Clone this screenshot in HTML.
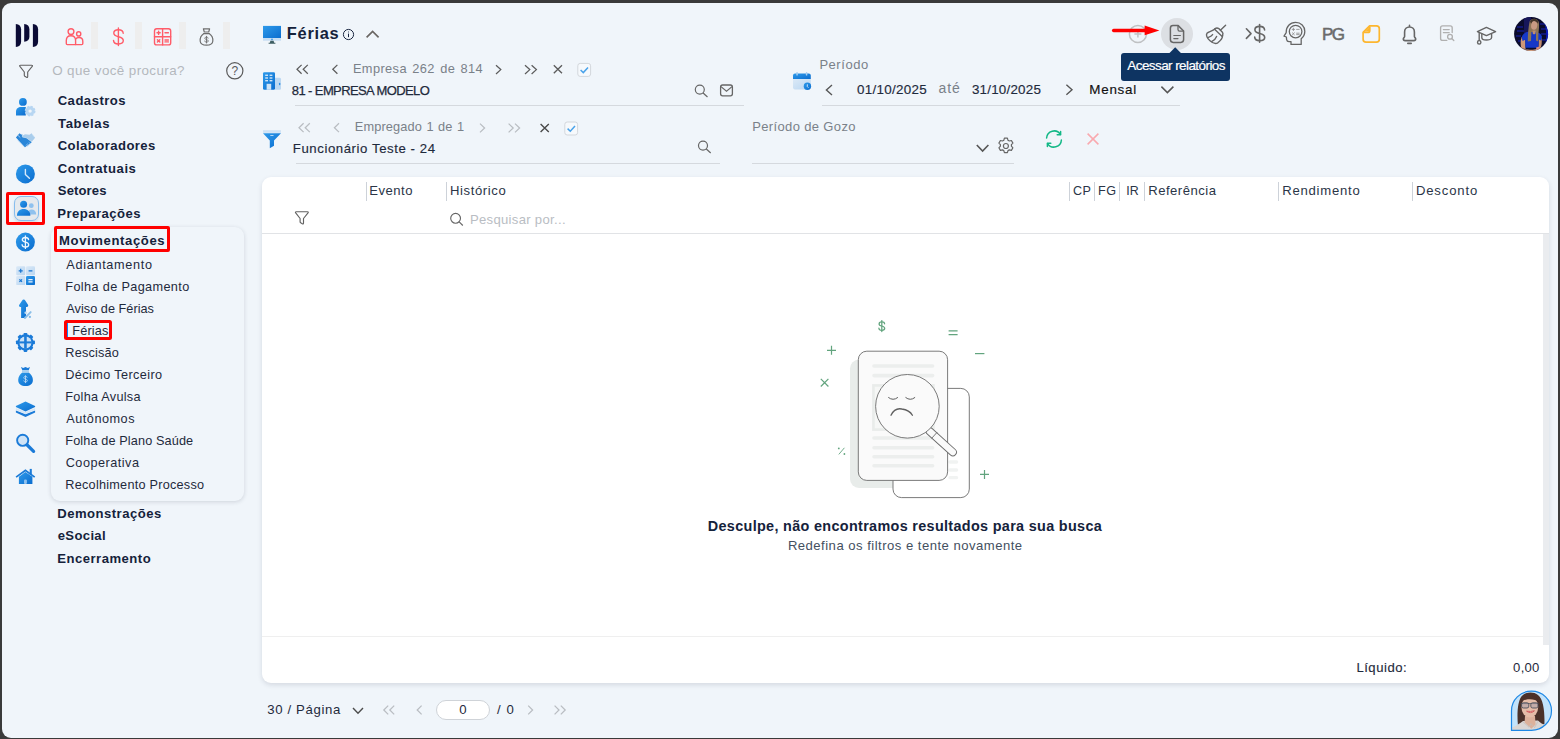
<!DOCTYPE html>
<html lang="pt-BR">
<head>
<meta charset="utf-8">
<title>Férias</title>
<style>
*{box-sizing:border-box;margin:0;padding:0}
html,body{width:1560px;height:739px;overflow:hidden;background:#3a3a3a}
body{font-family:"Liberation Sans",sans-serif;position:relative}
#app{position:absolute;left:2px;top:3px;width:1556px;height:734.5px;background:#f0f5fa;border-radius:9px;overflow:hidden}
#stage{position:absolute;left:-2px;top:-3px;width:1560px;height:739px}
.t{position:absolute;white-space:nowrap;line-height:1;display:block}
.a{position:absolute;display:block}
svg{position:absolute;overflow:visible}
.ln{position:absolute;height:1px;background:#d5d9de}
.sep{position:absolute;width:1px;top:182px;height:19px;background:#cdd2d9}
.tab{position:absolute;top:22px;width:6.5px;height:26.5px;background:#eeeeee}
</style>
</head>
<body>
<div id="app"><div id="stage">

<!-- top tab separators -->
<i class="tab" style="left:91px"></i><i class="tab" style="left:135px"></i><i class="tab" style="left:179px"></i><i class="tab" style="left:223px"></i>

<!-- selected side icon -->
<div class="a" style="left:13.5px;top:195.5px;width:25px;height:25.5px;border-radius:7px;background:#e5e9ed;border:1px solid #86bdee;box-shadow:0 2px 3px rgba(80,100,130,.18)"></div>
<div class="a" style="left:6px;top:192px;width:39px;height:32.8px;border:3.1px solid #ff0000;border-radius:2px"></div>

<!-- submenu card -->
<div class="a" style="left:51px;top:227px;width:193px;height:273.5px;border-radius:9px;background:#f0f5fa;box-shadow:0 1px 4px rgba(30,40,60,.16)"></div>
<div class="a" style="left:54px;top:226px;width:116.1px;height:25.9px;border:3px solid #ff0000;border-radius:2px"></div>
<div class="a" style="left:63.9px;top:319.9px;width:48.2px;height:20.1px;border:3px solid #ff0000;border-radius:2.5px"></div>
<div class="a" style="left:66.9px;top:322.9px;width:1.3px;height:14.1px;background:#0a84ff"></div>

<!-- filter underlines -->
<i class="ln" style="left:295px;top:105px;width:449px"></i>
<i class="ln" style="left:296px;top:163px;width:424px"></i>
<i class="ln" style="left:822px;top:105px;width:358px"></i>
<i class="ln" style="left:752px;top:163px;width:262px"></i>

<!-- table card -->
<div class="a" style="left:262px;top:177px;width:1287px;height:506px;border-radius:9px;background:#fff;box-shadow:0 2px 5px rgba(30,40,60,.13)"></div>
<i class="ln" style="left:262px;top:233px;width:1287px;background:#e1e3e6"></i>
<i class="ln" style="left:262px;top:636px;width:1287px;background:#efefef"></i>
<div class="a" style="left:1543px;top:234px;width:6px;height:411px;background:#eaecef"></div>
<i class="sep" style="left:366px"></i><i class="sep" style="left:446px"></i><i class="sep" style="left:1069px"></i><i class="sep" style="left:1094px"></i><i class="sep" style="left:1119px"></i><i class="sep" style="left:1144px"></i><i class="sep" style="left:1278px"></i><i class="sep" style="left:1412px"></i>

<!-- pagination input -->
<div class="a" style="left:436px;top:700px;width:53.5px;height:19.5px;border-radius:10px;background:#fff;border:1px solid #cfd3d8"></div>

<!-- tooltip -->
<div class="a" style="left:1160.5px;top:17.5px;width:32px;height:32px;border-radius:50%;background:#dcdfe3"></div>
<div class="a" style="left:1121px;top:53px;width:108.8px;height:28px;border-radius:3px;background:#0e3462"></div>
<div class="a" style="left:1171.4px;top:48.9px;width:8.4px;height:8.4px;background:#0e3462;transform:rotate(45deg)"></div>

<svg width="1560" height="739" viewBox="0 0 1560 739" style="left:0;top:0">
<defs>
<linearGradient id="bl" x1="0" y1="0" x2="1" y2="1"><stop offset="0" stop-color="#2e9aea"/><stop offset="1" stop-color="#0b6dcf"/></linearGradient>
<linearGradient id="lb" x1="0" y1="0" x2="1" y2="1"><stop offset="0" stop-color="#dbe9f7"/><stop offset="1" stop-color="#b9d6f1"/></linearGradient>
</defs>
<!-- logo -->
<g fill="#0b0b35">
<path d="M15.8,24 C19.2,24.2 21.1,26.2 21.1,29.2 V41.8 C21.1,44.8 19.2,46.8 15.8,47 Z"/>
<path d="M24.2,24 C27.6,24.2 29.4,26.2 29.4,29.2 V36.8 C29.4,39.7 27.6,41.6 24.2,41.8 Z"/>
<path d="M32.9,24 C36.3,24.2 38.1,26.2 38.1,29.2 V41.8 C38.1,44.8 36.3,46.8 32.9,47 Z"/>
</g>
<!-- top tab icons -->
<g fill="none" stroke="#ff5c69" stroke-width="1.4" stroke-linecap="round" stroke-linejoin="round">
<circle cx="71" cy="31.6" r="2.9"/><circle cx="78.7" cy="33.9" r="2.1"/>
<path d="M66.3,43.6 V40.6 C66.3,37.5 68.3,35.7 70.9,35.7 C73.6,35.7 75.6,37.5 75.6,40.6 V44.6 H67.3 Q66.3,44.6 66.3,43.6 Z"/>
<path d="M75.6,44.6 H81.8 Q82.8,44.6 82.8,43.6 V41.4 C82.8,38.8 81.2,37.5 79,37.5 C77.6,37.5 76.4,38 75.7,39"/>
<path d="M118.4,27.9 V45.6"/>
<path d="M123.2,33.2 C123,30.7 121,29.7 118.4,29.7 C115.8,29.7 113.8,30.9 113.8,33 C113.8,35.4 116,36.1 118.4,36.7 C120.9,37.3 123.3,38.1 123.3,40.6 C123.3,42.8 121.2,44 118.4,44 C115.6,44 113.6,42.8 113.5,40.4"/>
<rect x="154.5" y="28.7" width="16.2" height="16.2" rx="2.2"/>
<path d="M162.6,28.7 V44.9 M154.5,36.8 H170.7"/>
<path d="M157,32.8 H160.2 M158.6,31.2 V34.4 M165,32.8 H168.4 M157.4,39.7 L159.8,42.1 M159.8,39.7 L157.4,42.1 M165,40 H168.4 M165,41.9 H168.4"/>
</g>
<g fill="none" stroke="#6e6e6e" stroke-width="1.2" stroke-linejoin="round" stroke-linecap="round">
<path d="M203.9,33.6 C201,35.6 199.9,38.6 200.2,41.2 C200.5,44 203,45.1 206.5,45.1 C210,45.1 212.5,44 212.8,41.2 C213.1,38.6 212,35.6 209.1,33.6 Z"/>
<path d="M203.4,28.8 H209.6 L208.7,32 H204.3 Z M204,33.5 H209"/>
<path d="M206.5,36.3 V43 M208.1,38.2 C208,37.4 207.4,37.1 206.5,37.1 C205.6,37.1 204.9,37.5 204.9,38.3 C204.9,39.2 205.7,39.4 206.5,39.6 C207.4,39.8 208.2,40.1 208.2,41 C208.2,41.8 207.5,42.2 206.5,42.2 C205.5,42.2 204.9,41.8 204.8,41" stroke-width="0.9"/>
</g>
<!-- sidebar filter + help -->
<path d="M20.6,65.2 H31.6 Q33,65.2 32.2,66.4 L27.7,72 V76.6 Q27.7,78 26.5,77.3 L24.9,76.3 Q24.3,75.9 24.3,75.2 V72 L19.9,66.4 Q19.1,65.2 20.6,65.2 Z" fill="none" stroke="#626262" stroke-width="1.15" stroke-linejoin="round"/>
<circle cx="234.8" cy="70.8" r="8.1" fill="none" stroke="#5a5a5a" stroke-width="1.2"/>
<text x="234.8" y="75" text-anchor="middle" font-family="Liberation Sans, sans-serif" font-size="12" fill="#5a5a5a">?</text>

<!-- side icons -->
<!-- person gear -->
<circle cx="22.9" cy="101.9" r="3.9" fill="url(#bl)"/>
<path d="M16,115.4 V111.5 C16,108.6 18.2,106.9 21,106.9 H25.8 V115.4 Z" fill="url(#bl)"/>
<circle cx="30.1" cy="111.1" r="4.6" fill="#b7d6f2" stroke="#b7d6f2" stroke-width="1.6" stroke-dasharray="2.2 1.4"/>
<circle cx="30.1" cy="111.1" r="1.7" fill="#f0f5fa"/>
<!-- handshake -->
<path d="M17.4,140.4 L24.3,147.5 L25.6,146.3 L18.8,139.2 Z" fill="#cfe3f5"/>
<path d="M31.5,133.2 L35.1,137.7 L31.8,141.8 L26.6,138.1 L22.7,137.4 L22.1,136.1 L25,134.2 L29.5,134.8 Z" fill="#a9cdec"/>
<path d="M19.5,133.2 L15.9,137.6 L25,147.2 L31.8,142.3 L26.6,138.3 L22.7,137.6 L21.7,136.1 L22.8,134.8 L21.1,134.6 Z" fill="#2a86d8"/>
<path d="M17.6,135 L20.3,137.6" stroke="#cfe3f6" stroke-width="0.7" fill="none"/>
<path d="M25.6,145.6 L28,143.6 M27,146.4 L29.6,144.2 M28.6,142.2 L30.6,143.8" stroke="#9cc6ee" stroke-width="0.7" fill="none"/>
<path d="M32.4,134.4 L34,136.6" stroke="#d6e8f8" stroke-width="0.7" fill="none"/>
<!-- clock -->
<circle cx="25.4" cy="173.9" r="9.5" fill="url(#bl)"/>
<path d="M25.4,169.4 V174.4 L29.4,178.2" fill="none" stroke="#d6e9fb" stroke-width="1.4" stroke-linecap="round" stroke-linejoin="round"/>
<!-- selected people -->
<circle cx="31.3" cy="205.7" r="2.4" fill="#8fc1ee"/>
<path d="M27.5,214.4 C27.6,211.3 29.3,209.6 31.6,209.6 C34.2,209.6 36.1,211.5 36.2,214.4 Z" fill="#8fc1ee"/>
<circle cx="23.6" cy="204.2" r="3.5" fill="url(#bl)"/>
<path d="M16.9,215.7 C17,211.4 19.8,209 23.6,209 C27.5,209 30.3,211.4 30.4,215.7 Z" fill="url(#bl)"/>
<!-- dollar circle -->
<circle cx="25.4" cy="242.1" r="9.5" fill="url(#bl)"/>
<g fill="none" stroke="#eef6fe" stroke-width="1.3" stroke-linecap="round">
<path d="M25.4,236 V248.4"/>
<path d="M28.6,239.7 C28.4,238.1 27.1,237.5 25.4,237.5 C23.6,237.5 22.3,238.3 22.3,239.8 C22.3,241.4 23.8,241.8 25.4,242.2 C27.1,242.6 28.7,243.1 28.7,244.8 C28.7,246.3 27.3,247 25.4,247 C23.5,247 22.2,246.3 22.1,244.7"/>
</g>
<!-- calc -->
<rect x="16.2" y="266.3" width="9" height="9" rx="1.2" fill="url(#lb)"/>
<rect x="26" y="266.3" width="9" height="9" rx="1.2" fill="url(#lb)"/>
<rect x="16.2" y="276.1" width="9" height="9" rx="1.2" fill="url(#lb)"/>
<rect x="26" y="276.1" width="9" height="9" rx="1.2" fill="url(#bl)"/>
<path d="M18.7,270.8 H22.7 M20.7,268.8 V272.8 M28.6,270.8 H32.4 M19.4,279.3 L22,281.9 M22,279.3 L19.4,281.9" stroke="#1976d2" stroke-width="1.2" fill="none"/>
<path d="M28.4,279.6 H32.6 M28.4,281.8 H32.6" stroke="#eaf4fd" stroke-width="1.2" fill="none"/>
<!-- arrow up percent -->
<path d="M23.7,299.6 C24.4,299.6 24.9,300 25.4,300.7 L28,304.8 C28.6,305.9 28,307 26.8,307 H26 V317.9 H21.1 V307 H20.4 C19.2,307 18.6,305.9 19.3,304.8 L22,300.7 C22.5,300 23,299.6 23.7,299.6 Z" fill="url(#bl)"/>
<circle cx="25.6" cy="312.8" r="1.2" fill="#b9d8f2"/>
<path d="M24.9,318 L30.7,312.1" stroke="#8cbfe8" stroke-width="1.9" stroke-linecap="round" fill="none"/>
<circle cx="29.9" cy="316.9" r="1.15" fill="#7fb8e6"/>
<!-- gear cross -->
<g transform="translate(25.45 342.4)" fill="#1b7bd8">
<rect x="-1.9" y="-9.5" width="3.8" height="4" rx="0.8" transform="rotate(0)"/><rect x="-1.9" y="-9.5" width="3.8" height="4" rx="0.8" transform="rotate(45)"/><rect x="-1.9" y="-9.5" width="3.8" height="4" rx="0.8" transform="rotate(90)"/><rect x="-1.9" y="-9.5" width="3.8" height="4" rx="0.8" transform="rotate(135)"/><rect x="-1.9" y="-9.5" width="3.8" height="4" rx="0.8" transform="rotate(180)"/><rect x="-1.9" y="-9.5" width="3.8" height="4" rx="0.8" transform="rotate(225)"/><rect x="-1.9" y="-9.5" width="3.8" height="4" rx="0.8" transform="rotate(270)"/><rect x="-1.9" y="-9.5" width="3.8" height="4" rx="0.8" transform="rotate(315)"/>
<circle r="7" fill="none" stroke="#1b7bd8" stroke-width="2.2"/>
<circle r="6" fill="#cde2f6"/>
<rect x="-1.3" y="-6.3" width="2.6" height="12.6"/>
<rect x="-6.3" y="-1" width="12.6" height="2"/>
</g>
<!-- money bag -->
<path d="M22.2,372.6 H28.8 C31,374.4 32.9,377 32.9,380 C32.9,384 29.8,386.1 25.5,386.1 C21.2,386.1 18.2,384 18.2,380 C18.2,377 20,374.4 22.2,372.6 Z" fill="url(#bl)"/>
<path d="M20.9,366.9 L23.2,367.9 L25.5,366.9 L27.8,367.9 L30,366.9 L28.7,370.2 H22.4 Z" fill="#1b7bd8"/>
<rect x="22" y="370.2" width="6.9" height="2.4" fill="#a9cfee"/>
<path d="M25.5,375.3 V383.1 M27.2,377.6 C27.1,376.7 26.4,376.4 25.5,376.4 C24.5,376.4 23.8,376.8 23.8,377.7 C23.8,378.6 24.7,378.9 25.5,379.1 C26.4,379.3 27.3,379.6 27.3,380.6 C27.3,381.4 26.5,381.9 25.5,381.9 C24.5,381.9 23.8,381.4 23.7,380.5" fill="none" stroke="#b9d8f5" stroke-width="0.9"/>
<!-- layers -->
<path d="M15.9,410.4 L25.5,414.3 L35.1,410.4 V412.6 L25.5,417.1 L15.9,412.6 Z" fill="#1b7bd8"/>
<path d="M15.9,407.9 L25.5,411.9 L35.1,407.9 V410 L25.5,414 L15.9,410 Z" fill="#d4e6f7"/>
<path d="M25.5,401.5 L35.1,406 V407 L25.5,411.4 L15.9,407 V406 Z" fill="url(#bl)"/>
<!-- magnifier -->
<path d="M27.2,445 L33.6,451.4" stroke="#1b7bd8" stroke-width="3.2" stroke-linecap="round"/>
<circle cx="22.7" cy="440.3" r="5.6" fill="#cfe3f6" stroke="#1b7bd8" stroke-width="1.9"/>
<!-- house -->
<rect x="29.7" y="468.9" width="2.1" height="6" fill="#1b7bd8"/>
<path d="M25.4,469.2 L35.2,476.6 L34.2,477.8 L25.4,471.4 L16.6,477.8 L15.6,476.6 Z" fill="#1b7bd8"/>
<path d="M18.9,476.8 L25.4,472 L32.4,476.8 V484 H18.9 Z" fill="url(#bl)"/>
<rect x="24" y="479.6" width="2.9" height="4.4" rx="1" fill="#8fc1ee"/>
</svg>
<svg width="1560" height="739" viewBox="0 0 1560 739" style="left:0;top:0">
<!-- monitor -->
<rect x="263" y="25.9" width="18" height="12.2" fill="url(#bl)"/>
<rect x="263" y="38.1" width="18" height="2.6" fill="#c6ddf3"/>
<circle cx="272" cy="39.4" r="0.8" fill="#2e8fe4"/>
<path d="M270.4,40.7 H273.6 L274.2,42.8 H275.4 V43.8 H268.6 V42.8 H269.8 Z" fill="#3f5f63"/>
<!-- info -->
<circle cx="348.5" cy="34.5" r="5.1" fill="none" stroke="#1a2640" stroke-width="1"/>
<path d="M348.5,33.6 V37.2 M348.5,31.6 V32.4" stroke="#1a2640" stroke-width="1" fill="none"/>
<!-- chevron up -->
<path d="M366.6,37.4 L372.6,31.5 L378.6,37.4" fill="none" stroke="#6a6663" stroke-width="1.7"/>

<!-- building -->
<rect x="263" y="72.2" width="12" height="17.6" rx="1.3" fill="url(#bl)"/>
<path d="M275,77.8 H279.6 Q281,77.8 281,79.2 V88.6 Q281,89.8 279.8,89.8 H275 Z" fill="#bcd8f2"/>
<rect x="279" y="82.8" width="1.3" height="2.4" rx="0.6" fill="#2f8fe3"/>
<g fill="#cfe4f7"><rect x="265.2" y="74.6" width="2.8" height="1.4"/><rect x="269.6" y="74.6" width="2.8" height="1.4"/><rect x="265.2" y="77.3" width="2.8" height="1.4"/><rect x="269.6" y="77.3" width="2.8" height="1.4"/><rect x="265.2" y="80" width="2.8" height="1.4"/><rect x="269.6" y="80" width="2.8" height="1.4"/><rect x="266.6" y="83.8" width="4.6" height="6"/></g>
<!-- funnel -->
<rect x="263" y="130.2" width="18" height="2.6" fill="#cfe3f6"/>
<path d="M263,133.2 H281 L274,140.6 V145.8 L269.8,148.2 V140.6 Z" fill="url(#bl)"/>
<rect x="270.2" y="135" width="3.4" height="1" rx="0.5" fill="#b6d6f3"/>

<!-- row 1 nav -->
<g fill="none" stroke="#5c5c5c" stroke-width="1.25">
<path d="M301.6,64.9 L297,69.3 L301.6,73.7 M307.8,64.9 L303.2,69.3 L307.8,73.7"/>
<path d="M337.4,64.9 L332.8,69.3 L337.4,73.7"/>
<path d="M496,65.2 L500.8,69.6 L496,74"/>
<path d="M525,65.2 L529.8,69.6 L525,74 M531.6,65.2 L536.4,69.6 L531.6,74"/>
<path d="M553.8,65.3 L562,73.3 M562,65.3 L553.8,73.3" stroke-width="1.35"/>
</g>
<rect x="577.8" y="63.4" width="12.8" height="13" rx="2.4" fill="#f6f9fc" stroke="#d3d7dc" stroke-width="1"/>
<path d="M580.6,70 L583.3,72.6 L588,67.4" fill="none" stroke="#4aa3ea" stroke-width="1.5"/>
<circle cx="699.8" cy="89.6" r="4.5" fill="none" stroke="#666" stroke-width="1.2"/>
<path d="M703.1,93 L707.5,97" stroke="#666" stroke-width="1.2"/>
<rect x="720.6" y="85" width="11.8" height="10.8" rx="2" fill="none" stroke="#666" stroke-width="1.3"/>
<path d="M721,86.6 L726.5,91.2 L732,86.6" fill="none" stroke="#666" stroke-width="1.2"/>

<!-- row 2 nav -->
<g fill="none" stroke="#b9bdc2" stroke-width="1.25">
<path d="M303.6,123.3 L299,127.7 L303.6,132.1 M309.8,123.3 L305.2,127.7 L309.8,132.1"/>
<path d="M339,123.3 L334.4,127.7 L339,132.1"/>
<path d="M480,123.6 L484.6,128 L480,132.4"/>
<path d="M508.6,123.6 L513.2,128 L508.6,132.4 M515,123.6 L519.6,128 L515,132.4"/>
</g>
<path d="M540.6,123.9 L548.8,131.9 M548.8,123.9 L540.6,131.9" fill="none" stroke="#4a4a4a" stroke-width="1.4"/>
<rect x="564.8" y="122" width="12.8" height="13" rx="2.4" fill="#f6f9fc" stroke="#d3d7dc" stroke-width="1"/>
<path d="M567.6,128.6 L570.3,131.2 L575,126" fill="none" stroke="#4aa3ea" stroke-width="1.5"/>
<circle cx="703" cy="145.6" r="4.5" fill="none" stroke="#666" stroke-width="1.2"/>
<path d="M706.3,149 L710.7,153" stroke="#666" stroke-width="1.2"/>

<!-- calendar -->
<rect x="796.3" y="72.2" width="1.5" height="3.6" rx="0.7" fill="#8fc1ee"/><rect x="805.8" y="72.2" width="1.5" height="3.6" rx="0.7" fill="#8fc1ee"/>
<path d="M793,79 V75.6 Q793,73.6 795,73.6 H808.8 Q810.8,73.6 810.8,75.6 V79 Z" fill="url(#bl)"/>
<rect x="796.3" y="72.6" width="1.5" height="3" rx="0.7" fill="#a9cff1"/><rect x="805.8" y="72.6" width="1.5" height="3" rx="0.7" fill="#a9cff1"/>
<path d="M793,79 H810.8 V87.6 Q810.8,89.5 808.8,89.5 H795 Q793,89.5 793,87.6 Z" fill="url(#lb)"/>
<circle cx="807.4" cy="86.3" r="3.7" fill="url(#bl)"/>
<path d="M807.3,84.3 V86.6 L808.4,87.7" fill="none" stroke="#e4f0fc" stroke-width="0.9"/>
<!-- period nav -->
<g fill="none" stroke="#575757" stroke-width="1.4">
<path d="M832,85 L826.4,90 L832,95"/>
<path d="M1066.4,84.8 L1072,89.8 L1066.4,94.8"/>
<path d="M1161.4,86.6 L1167.4,92.6 L1173.4,86.6" stroke-width="1.5"/>
<path d="M976.8,145 L982.6,151 L988.4,145" stroke-width="1.6"/>
</g>
<!-- gear -->
<g transform="translate(1005.9 146)" fill="none" stroke="#666" stroke-width="1.2" stroke-linejoin="round">
<path d="M-1.5,-7.8 h3 l0.6,2.1 l1.3,0.7 l2.1,-0.5 l1.5,2.6 l-1.5,1.6 v1.5 l1.5,1.6 l-1.5,2.6 l-2.1,-0.5 l-1.3,0.7 l-0.6,2.1 h-3 l-0.6,-2.1 l-1.3,-0.7 l-2.1,0.5 l-1.5,-2.6 l1.5,-1.6 v-1.5 l-1.5,-1.6 l1.5,-2.6 l2.1,0.5 l1.3,-0.7 z"/>
<circle r="2.5"/>
</g>
<!-- refresh -->
<g fill="none" stroke="#12b886" stroke-width="1.5" stroke-linecap="round" stroke-linejoin="round">
<path d="M1046.6,138 A7.5,7.5 0 0 1 1060.4,134.4"/>
<path d="M1061.4,140 A7.5,7.5 0 0 1 1047.6,143.6"/>
<path d="M1060.6,131.6 V134.8 H1057.2"/>
<path d="M1047.4,146.4 V143.2 H1050.8"/>
</g>
<path d="M1087.6,133.6 L1098.4,144.4 M1098.4,133.6 L1087.6,144.4" stroke="#f9a9af" stroke-width="1.5" fill="none"/>

<!-- header filter / search -->
<path transform="translate(275.8 146.5)" d="M20.6,65.2 H31.6 Q33,65.2 32.2,66.4 L27.7,72 V76.6 Q27.7,78 26.5,77.3 L24.9,76.3 Q24.3,75.9 24.3,75.2 V72 L19.9,66.4 Q19.1,65.2 20.6,65.2 Z" fill="none" stroke="#626262" stroke-width="1.15" stroke-linejoin="round"/>
<circle cx="455.6" cy="218.3" r="4.9" fill="none" stroke="#666" stroke-width="1.15"/>
<path d="M459.2,221.9 L462.8,225.5" stroke="#666" stroke-width="1.15"/>

<!-- pagination -->
<path d="M353,708 L358,713.2 L363,708" fill="none" stroke="#4c4c4c" stroke-width="1.4"/>
<g fill="none" stroke="#b9bdc2" stroke-width="1.25">
<path d="M388.2,705.6 L383.8,710 L388.2,714.4 M394.2,705.6 L389.8,710 L394.2,714.4"/>
<path d="M421.6,705.6 L417.2,710 L421.6,714.4"/>
<path d="M528.2,705.6 L532.6,710 L528.2,714.4"/>
<path d="M554.6,705.6 L559,710 L554.6,714.4 M560.8,705.6 L565.2,710 L560.8,714.4"/>
</g>

<!-- top right icons -->
<circle cx="1137.9" cy="33.9" r="8.5" fill="none" stroke="#bfc1c3" stroke-width="1.5"/>
<path d="M1134.4,33.9 H1141.4 M1137.9,30.4 V37.4" stroke="#bfc1c3" stroke-width="1.5"/>
<!-- doc -->
<g fill="none" stroke="#666" stroke-width="1.5" stroke-linejoin="round" stroke-linecap="round">
<path d="M1173,25.6 H1178.2 L1183.6,31 V39.6 Q1183.6,42.4 1180.8,42.4 H1173.2 Q1170.4,42.4 1170.4,39.6 V28.2 Q1170.4,25.6 1173,25.6 Z"/>
<path d="M1178,25.9 V29.6 Q1178,31.2 1179.6,31.2 H1183.3" stroke-width="1.3"/>
<path d="M1173.8,35.5 H1180.4 M1173.8,38.6 H1178" stroke-width="1.2"/>
</g>
<!-- red arrow -->
<path d="M1113.6,30.5 H1146" stroke="#ff0000" stroke-width="3.3" stroke-linecap="round"/>
<path d="M1144.6,25.6 L1159.4,30.4 L1144.6,35.2 Z" fill="#ff0000"/>
<!-- broom -->
<g fill="none" stroke="#666" stroke-width="1.4" stroke-linecap="round" stroke-linejoin="round">
<path d="M1220.4,30.2 L1225.6,25.2"/>
<path d="M1215,28.6 Q1217,27.4 1218.8,28.6 L1222.4,32.2 Q1223.4,33.6 1222.6,35.4"/>
<path d="M1214.6,29.2 L1222.2,36.4"/>
<path d="M1214.8,29 C1212.4,31.2 1208.6,31.4 1207,33.2 C1205.6,35 1207.2,38.4 1210,40.8 C1212.8,43.2 1216,44 1217.8,42.8 C1220.2,41 1222.6,38 1222.6,35.6"/>
<path d="M1208.4,37.4 Q1211.2,36.6 1212.6,34.6 M1211.6,41.6 Q1215.2,40 1216.6,36.4"/>
</g>
<!-- >$ -->
<g fill="none" stroke="#666" stroke-width="1.6" stroke-linecap="round" stroke-linejoin="round">
<path d="M1246.4,28.8 L1251,33.6 L1246.4,38.4"/>
<path d="M1259.6,24.6 V42.2"/>
<path d="M1264.6,30 C1264.4,27.4 1262.2,26.4 1259.6,26.4 C1257,26.4 1254.9,27.6 1254.9,29.8 C1254.9,32.2 1257.2,32.9 1259.6,33.5 C1262.2,34.1 1264.7,34.9 1264.7,37.4 C1264.7,39.6 1262.5,40.6 1259.6,40.6 C1256.8,40.6 1254.8,39.5 1254.7,37.1"/>
</g>
<!-- head -->
<g fill="none" stroke="#666" stroke-width="1.3" stroke-linejoin="round" stroke-linecap="round">
<path d="M1291,44.4 V41.6 H1289 Q1287,41.6 1286.6,39.6 L1286.4,37 L1284,36.2 L1286.2,32.6 C1286,26.6 1290,22.4 1295.6,22.4 C1301,22.4 1304.8,26.2 1304.8,31.4 C1304.8,34.6 1303.4,36.8 1301.2,38.8 V44.4 Z"/>
<circle cx="1295.6" cy="31.6" r="6.3"/>
<path d="M1292.2,29.4 H1294.6 M1293.4,28.2 V30.6 M1296.6,29.4 H1299.2 M1292.4,32.8 L1294.4,34.8 M1294.4,32.8 L1292.4,34.8 M1296.6,33.2 H1299.2 M1296.6,34.6 H1299.2" stroke-width="0.8" stroke="#888"/>
</g>
<!-- note -->
<g fill="none" stroke="#fdb62f" stroke-width="1.7" stroke-linejoin="round">
<path d="M1369.6,25.9 H1376.4 Q1379.3,25.9 1379.3,28.8 V39.2 Q1379.3,42.1 1376.4,42.1 H1366 Q1363.1,42.1 1363.1,39.2 V32.4 Z"/>
<path d="M1369.8,26.4 V30.4 Q1369.8,32.4 1367.8,32.4 H1363.6"/>
</g>
<path d="M1369,27.6 V31.6 H1365 Z" fill="#fdb62f"/>
<!-- bell -->
<g fill="none" stroke="#666" stroke-width="1.6" stroke-linejoin="round" stroke-linecap="round">
<path d="M1409.5,25.4 V27 M1404.6,36.6 V32 C1404.6,29 1406.7,27 1409.5,27 C1412.3,27 1414.4,29 1414.4,32 V36.6 C1414.4,37.6 1415.7,37.8 1415.7,39 C1415.7,40.2 1414.9,40.6 1413.9,40.6 H1405.1 C1404.1,40.6 1403.3,40.2 1403.3,39 C1403.3,37.8 1404.6,37.6 1404.6,36.6 Z"/>
<path d="M1407.8,43.4 H1411.2"/>
</g>
<!-- doc search -->
<g fill="none" stroke="#b0b0b0" stroke-width="1.35" stroke-linecap="round" stroke-linejoin="round">
<path d="M1446.8,40.4 H1442.6 Q1440.6,40.4 1440.6,38.4 V27.8 Q1440.6,25.8 1442.6,25.8 H1450.2 Q1452.2,25.8 1452.2,27.8 V32.6"/>
<path d="M1443.4,29.6 H1449.2 M1443.4,32.6 H1449.2"/>
<circle cx="1450" cy="36.8" r="2.4"/><path d="M1451.8,38.6 L1453.8,40.6"/>
</g>
<!-- grad cap -->
<g fill="none" stroke="#666" stroke-width="1.4" stroke-linejoin="round" stroke-linecap="round">
<path d="M1477.4,31.6 L1486.4,27.4 L1495.6,31.6 L1486.4,35.6 Z"/>
<path d="M1481.8,33.8 V37.4 C1481.8,39 1484,40 1486.4,40 C1488.8,40 1491.6,39 1491.6,37.4 V33.8"/>
<path d="M1479.2,32.6 V40.2"/>
<ellipse cx="1479.2" cy="42.3" rx="1.7" ry="1.8"/>
</g>
</svg>
<svg width="1560" height="739" viewBox="0 0 1560 739" style="left:0;top:0">
<rect x="850" y="359.5" width="88" height="128.5" rx="9" fill="#e8ecea"/>
<rect x="893" y="388.4" width="76.3" height="109.2" rx="8.5" fill="#fff" stroke="#6b6b6b" stroke-width="0.9"/>
<g stroke="#f1f3f2" stroke-width="3.4" stroke-linecap="round"><path d="M950,462 H956.6 M950,470 H956.6 M950,477.6 H956.6"/></g>
<rect x="858.3" y="351.2" width="89.3" height="129.2" rx="8.5" fill="#fafafa" stroke="#6b6b6b" stroke-width="0.9"/>
<g stroke="#eceeed" stroke-width="3.6" stroke-linecap="round"><path d="M874,366 H932.6 M874,375.6 H932.6 M874,438 H932.6 M874,447.8 H932.6 M874,456.8 H932.6 M874,465.8 H932.6"/></g>
<rect x="873.4" y="385.4" width="60" height="44.2" fill="#f6f7f6" stroke="#e9ecea" stroke-width="2.6"/>
<!-- handle -->
<path d="M929.8,431.4 L952.8,452.2" stroke="#6b6b6b" stroke-width="8.2" stroke-linecap="round"/>
<path d="M929.8,431.4 L952.8,452.2" stroke="#fafafa" stroke-width="6.4" stroke-linecap="round"/>
<path d="M931.6,438.4 L937.2,432.2" stroke="#6b6b6b" stroke-width="0.9"/>
<circle cx="907.4" cy="406.3" r="31.8" fill="#fafafa" stroke="#6b6b6b" stroke-width="0.9"/>
<g fill="none" stroke="#5f5f5f" stroke-width="1" stroke-linecap="round">
<path d="M888.6,397.6 Q893,401.2 897.6,397.6"/>
<path d="M905.8,397.6 Q910.2,401.2 914.8,397.6"/>
<path d="M891,415.2 C894,409 898,408.2 901.8,409 C906,409.6 910,411 912.4,415.2" stroke-width="1.3"/>
</g>
<g fill="none" stroke="#62a47e" stroke-width="1.2">
<path d="M827,350.3 H836 M831.5,345.8 V354.8"/>
<path d="M948.6,330.8 H957.6 M948.6,334.6 H957.6"/>
<path d="M975,353.6 H984.4"/>
<path d="M820.8,378.9 L828.4,386.5 M828.4,378.9 L820.8,386.5"/>
<path d="M980,474.4 H989 M984.5,469.9 V478.9"/>
<path d="M838.8,454.4 L844.4,447.8" stroke-width="0.9"/>
</g>
<circle cx="838.8" cy="448.4" r="0.9" fill="#62a47e"/><circle cx="844.4" cy="454" r="0.9" fill="#62a47e"/>
<g fill="none" stroke="#62a47e" stroke-width="1.25" stroke-linecap="round">
<path d="M881.8,320.6 V331.6"/>
<path d="M884.6,323.8 C884.5,322.4 883.3,321.9 881.8,321.9 C880.3,321.9 879.1,322.6 879.1,323.9 C879.1,325.3 880.4,325.7 881.8,326 C883.3,326.4 884.7,326.8 884.7,328.3 C884.7,329.6 883.4,330.3 881.8,330.3 C880.2,330.3 879,329.6 878.9,328.2"/>
</g>
</svg>
<svg width="1560" height="739" viewBox="0 0 1560 739" style="left:0;top:0">
<defs>
<clipPath id="c1"><circle cx="1531.1" cy="34" r="17"/></clipPath>
<clipPath id="c2"><path d="M1511.5,730.3 V710.8 A20,19.6 0 1 1 1531.5,730.3 Z"/></clipPath>
<filter id="b1" x="-10%" y="-10%" width="120%" height="120%"><feGaussianBlur stdDeviation="0.6"/></filter>
<filter id="b2" x="-10%" y="-10%" width="120%" height="120%"><feGaussianBlur stdDeviation="0.45"/></filter>
</defs>
<!-- user avatar -->
<g clip-path="url(#c1)">
<rect x="1514" y="17" width="35" height="35" fill="#0a0b2c"/>
<g filter="url(#b1)">
<path d="M1542,17 H1549 V52 H1543 C1547,44 1548,28 1542,17 Z" fill="#0d1cc0"/>
<path d="M1524,17 H1531 V34 H1524 Z" fill="#15155a"/>
<path d="M1517,27 H1523 M1517,31 H1524 M1516,36 H1521 M1518,41 H1521 M1540,24 H1545 M1541,29 H1546 M1541,34 H1546 M1542,40 H1546" stroke="#1222b8" stroke-width="1.1"/>
<!-- arms -->
<path d="M1521.6,37 C1520.2,41 1520.4,46 1521.6,48.6 L1525.6,49 L1525.4,38 Z" fill="#cf9878"/>
<path d="M1538.6,38 L1538.4,48 L1541,47 C1542,44 1542,40 1541.2,37 Z" fill="#c08a6c"/>
<!-- dress -->
<path d="M1521.6,37.4 C1522.4,33.2 1526.6,31.6 1531.6,31.6 C1536.6,31.4 1541,32.8 1542,36.8 L1541,40.6 L1538.8,39.4 L1538.4,47.8 L1525.4,47.8 L1525.2,39.8 L1522.6,41 Z" fill="#1438c8"/>
<path d="M1521,48.2 C1526,50.4 1535,50.6 1541.6,47 L1541,52 H1520 Z" fill="#d7a07e"/>
<path d="M1536,47.6 L1539.6,46.6 L1540.2,48.6 L1536.4,49.6 Z" fill="#d98a7c"/>
<!-- hair -->
<path d="M1529.6,21.6 C1531,17.8 1537.2,17.6 1538.6,21.6 C1539.6,25 1538.8,30 1538.4,34 L1538.2,41.6 L1536,40.6 L1536,32 L1531.4,32 L1531,41 L1527.8,41.6 C1527.8,35 1528.4,27 1529.6,21.6 Z" fill="#8c7556"/>
<path d="M1530,21.4 C1531.6,17.8 1537,17.8 1538.4,21.4 L1537.4,23.6 L1531,23.6 Z" fill="#43352a"/>
<!-- face -->
<ellipse cx="1534.2" cy="25.4" rx="3.1" ry="4.3" fill="#c89a82" transform="rotate(8 1534.2 25.4)"/>
<path d="M1532.6,30.6 H1535.6 V33.4 L1534,34.6 L1532.6,33.4 Z" fill="#bd8c72"/>
</g>
</g>
<!-- assistant avatar -->
<path d="M1511.5,730.3 V710.8 A20,19.6 0 1 1 1531.5,730.3 Z" fill="#c2e3fb"/>
<g clip-path="url(#c2)"><g filter="url(#b2)">
<path d="M1518,726 C1516.8,714 1517.6,702 1521.4,696.6 C1525,691.8 1533.4,691.2 1538,695 C1543.6,699.6 1544.8,712 1544.4,724 L1536,728 H1521 Z" fill="#4b302b"/>
<path d="M1512,731 L1512,727.6 C1516,725.8 1520,723.6 1523,721 L1538,720.6 C1540,722.8 1543,724.6 1546.4,725.4 L1542,731 Z" fill="#dad6d4"/>
<path d="M1525,716 H1535 L1535.6,724.6 L1531.4,728.8 L1524.6,722.6 Z" fill="#dcb19b"/>
<ellipse cx="1529.8" cy="707" rx="8.4" ry="10.6" fill="#e5bda8"/>
<path d="M1521,701.6 C1522,694.4 1536.6,693.4 1538.8,701.8 C1535,698.6 1526,698.2 1521,701.6 Z" fill="#4b302b"/>
<path d="M1520.6,703.6 H1538.6" stroke="#4a4f5a" stroke-width="0.8"/>
<rect x="1521.6" y="702.8" width="7.2" height="5.2" rx="1.8" fill="#a9a0aa" fill-opacity="0.55" stroke="#454a55" stroke-width="0.85"/>
<rect x="1530.8" y="702.8" width="7.2" height="5.2" rx="1.8" fill="#a9a0aa" fill-opacity="0.55" stroke="#454a55" stroke-width="0.85"/>
<path d="M1526.6,711.2 Q1530.6,714.2 1534.4,710.8 Q1530.6,712 1526.6,711.2 Z" fill="#fff" stroke="#cf5555" stroke-width="0.9"/>
<path d="M1523,722 L1529,727.2 L1531,723.6 L1534.6,727.6 L1538,721.2" fill="none" stroke="#c4bfbd" stroke-width="0.8"/>
</g></g>
<path d="M1511.5,730.3 V710.8 A20,19.6 0 1 1 1531.5,730.3 Z" fill="none" stroke="#1e88e5" stroke-width="1.2"/>
</svg>


<nav>
<span class="t" style="left:52.2px;top:63.9px;font-size:13.4px;color:#b4b8bd;letter-spacing:0.40px;">O que você procura?</span>
<span class="t" style="left:57.7px;top:94.0px;font-size:13.1px;color:#15223b;font-weight:700;letter-spacing:0.48px;">Cadastros</span>
<span class="t" style="left:58.1px;top:117.0px;font-size:13.1px;color:#15223b;font-weight:700;letter-spacing:0.61px;">Tabelas</span>
<span class="t" style="left:57.7px;top:139.0px;font-size:13.1px;color:#15223b;font-weight:700;letter-spacing:0.44px;">Colaboradores</span>
<span class="t" style="left:57.7px;top:162.0px;font-size:13.1px;color:#15223b;font-weight:700;letter-spacing:0.54px;">Contratuais</span>
<span class="t" style="left:57.8px;top:184.0px;font-size:13.1px;color:#15223b;font-weight:700;letter-spacing:0.11px;">Setores</span>
<span class="t" style="left:57.3px;top:207.0px;font-size:13.1px;color:#15223b;font-weight:700;letter-spacing:0.45px;">Preparações</span>
<span class="t" style="left:59.0px;top:234.0px;font-size:13.1px;color:#15223b;font-weight:700;letter-spacing:0.61px;">Movimentações</span>
<span class="t" style="left:57.3px;top:507.1px;font-size:13.1px;color:#15223b;font-weight:700;letter-spacing:0.47px;">Demonstrações</span>
<span class="t" style="left:57.7px;top:529.1px;font-size:13.1px;color:#15223b;font-weight:700;letter-spacing:0.35px;">eSocial</span>
<span class="t" style="left:57.3px;top:552.1px;font-size:13.1px;color:#15223b;font-weight:700;letter-spacing:0.48px;">Encerramento</span>
<span class="t" style="left:66.3px;top:258.8px;font-size:12.7px;color:#1f2a3c;letter-spacing:0.68px;">Adiantamento</span>
<span class="t" style="left:65.3px;top:280.8px;font-size:12.7px;color:#1f2a3c;letter-spacing:0.36px;">Folha de Pagamento</span>
<span class="t" style="left:66.3px;top:302.8px;font-size:12.7px;color:#1f2a3c;letter-spacing:0.03px;">Aviso de Férias</span>
<span class="t" style="left:72.3px;top:324.8px;font-size:12.7px;color:#1f2a3c;letter-spacing:0.17px;">Férias</span>
<span class="t" style="left:65.3px;top:346.8px;font-size:12.7px;color:#1f2a3c;letter-spacing:0.18px;">Rescisão</span>
<span class="t" style="left:65.3px;top:368.8px;font-size:12.7px;color:#1f2a3c;letter-spacing:0.38px;">Décimo Terceiro</span>
<span class="t" style="left:65.3px;top:390.8px;font-size:12.7px;color:#1f2a3c;letter-spacing:0.25px;">Folha Avulsa</span>
<span class="t" style="left:66.3px;top:412.8px;font-size:12.7px;color:#1f2a3c;letter-spacing:0.50px;">Autônomos</span>
<span class="t" style="left:65.3px;top:434.8px;font-size:12.7px;color:#1f2a3c;letter-spacing:0.12px;">Folha de Plano Saúde</span>
<span class="t" style="left:65.7px;top:456.8px;font-size:12.7px;color:#1f2a3c;letter-spacing:0.49px;">Cooperativa</span>
<span class="t" style="left:65.3px;top:478.8px;font-size:12.7px;color:#1f2a3c;letter-spacing:0.24px;">Recolhimento Processo</span>
</nav>
<header>
<span class="t" style="left:286.8px;top:24.9px;font-size:16.4px;color:#15223b;font-weight:700;letter-spacing:0.73px;">Férias</span>
<span class="t" style="left:352.9px;top:63.2px;font-size:12.8px;color:#7a8189;letter-spacing:0.40px;word-spacing:1.4px;">Empresa 262 de 814</span>
<span class="t" style="left:291.8px;top:84.1px;font-size:13px;color:#1f2a3c;letter-spacing:-0.60px;-webkit-text-stroke:0.25px currentColor;">81 - EMPRESA MODELO</span>
<span class="t" style="left:354.8px;top:121.2px;font-size:12.8px;color:#7a8189;letter-spacing:0.11px;word-spacing:0.8px;">Empregado 1 de 1</span>
<span class="t" style="left:292.8px;top:142.0px;font-size:13.2px;color:#1f2a3c;letter-spacing:0.57px;-webkit-text-stroke:0.15px currentColor;">Funcionário Teste - 24</span>
<span class="t" style="left:819.4px;top:58.1px;font-size:13px;color:#7a8189;letter-spacing:0.54px;">Período</span>
<span class="t" style="left:856.9px;top:82.9px;font-size:13.4px;color:#1f2a3c;letter-spacing:0.31px;-webkit-text-stroke:0.15px currentColor;">01/10/2025</span>
<span class="t" style="left:938.5px;top:81.1px;font-size:14px;color:#7a8189;letter-spacing:0.92px;">até</span>
<span class="t" style="left:971.9px;top:82.9px;font-size:13.4px;color:#1f2a3c;letter-spacing:0.22px;-webkit-text-stroke:0.15px currentColor;">31/10/2025</span>
<span class="t" style="left:1089.3px;top:82.9px;font-size:13.4px;color:#111;letter-spacing:0.74px;-webkit-text-stroke:0.15px currentColor;">Mensal</span>
<span class="t" style="left:752.2px;top:120.1px;font-size:13px;color:#7a8189;letter-spacing:0.36px;">Período de Gozo</span>
<span class="t" style="left:1127.3px;top:58.9px;font-size:13.5px;color:#fff;letter-spacing:-0.58px;-webkit-text-stroke:0.2px currentColor;">Acessar relatórios</span>
<span class="t" style="left:1321.9px;top:26.1px;font-size:17px;color:#6b6b6b;letter-spacing:-1.50px;-webkit-text-stroke:0.55px currentColor;">PG</span>
</header>
<main>
<span class="t" style="left:369.2px;top:184.0px;font-size:13.1px;color:#2a3547;letter-spacing:0.51px;">Evento</span>
<span class="t" style="left:449.9px;top:184.0px;font-size:13.1px;color:#2a3547;letter-spacing:0.62px;">Histórico</span>
<span class="t" style="left:1073.0px;top:184.8px;font-size:12.6px;color:#2a3547;letter-spacing:0.50px;">CP</span>
<span class="t" style="left:1098.0px;top:184.8px;font-size:12.6px;color:#2a3547;letter-spacing:0.47px;">FG</span>
<span class="t" style="left:1126.3px;top:184.9px;font-size:12.4px;color:#2a3547;">IR</span>
<span class="t" style="left:1148.2px;top:184.0px;font-size:13.1px;color:#2a3547;letter-spacing:0.49px;">Referência</span>
<span class="t" style="left:1282.2px;top:184.0px;font-size:13.1px;color:#2a3547;letter-spacing:0.78px;">Rendimento</span>
<span class="t" style="left:1415.9px;top:184.0px;font-size:13.1px;color:#2a3547;letter-spacing:0.86px;">Desconto</span>
<span class="t" style="left:469.9px;top:213.0px;font-size:13.1px;color:#b9bdc3;letter-spacing:0.31px;">Pesquisar por...</span>
<span class="t" style="left:707.8px;top:518.9px;font-size:14.4px;color:#15223b;font-weight:700;letter-spacing:0.33px;">Desculpe, não encontramos resultados para sua busca</span>
<span class="t" style="left:787.9px;top:539.1px;font-size:13.1px;color:#44505f;letter-spacing:0.48px;">Redefina os filtros e tente novamente</span>
<span class="t" style="left:1356.4px;top:661.1px;font-size:13.1px;color:#1f2a3c;letter-spacing:0.52px;-webkit-text-stroke:0.15px currentColor;">Líquido:</span>
<span class="t" style="left:1513.1px;top:661.1px;font-size:13.1px;color:#1f2a3c;letter-spacing:0.25px;">0,00</span>
</main>
<footer>
<span class="t" style="left:267.2px;top:703.0px;font-size:13.2px;color:#1f2a3c;letter-spacing:0.64px;">30 / Página</span>
<span class="t" style="left:459.2px;top:703.0px;font-size:13.2px;color:#1f2a3c;">0</span>
<span class="t" style="left:497.0px;top:703.0px;font-size:13.2px;color:#1f2a3c;letter-spacing:1.07px;">/ 0</span>
</footer>

</div></div>
</body>
</html>
